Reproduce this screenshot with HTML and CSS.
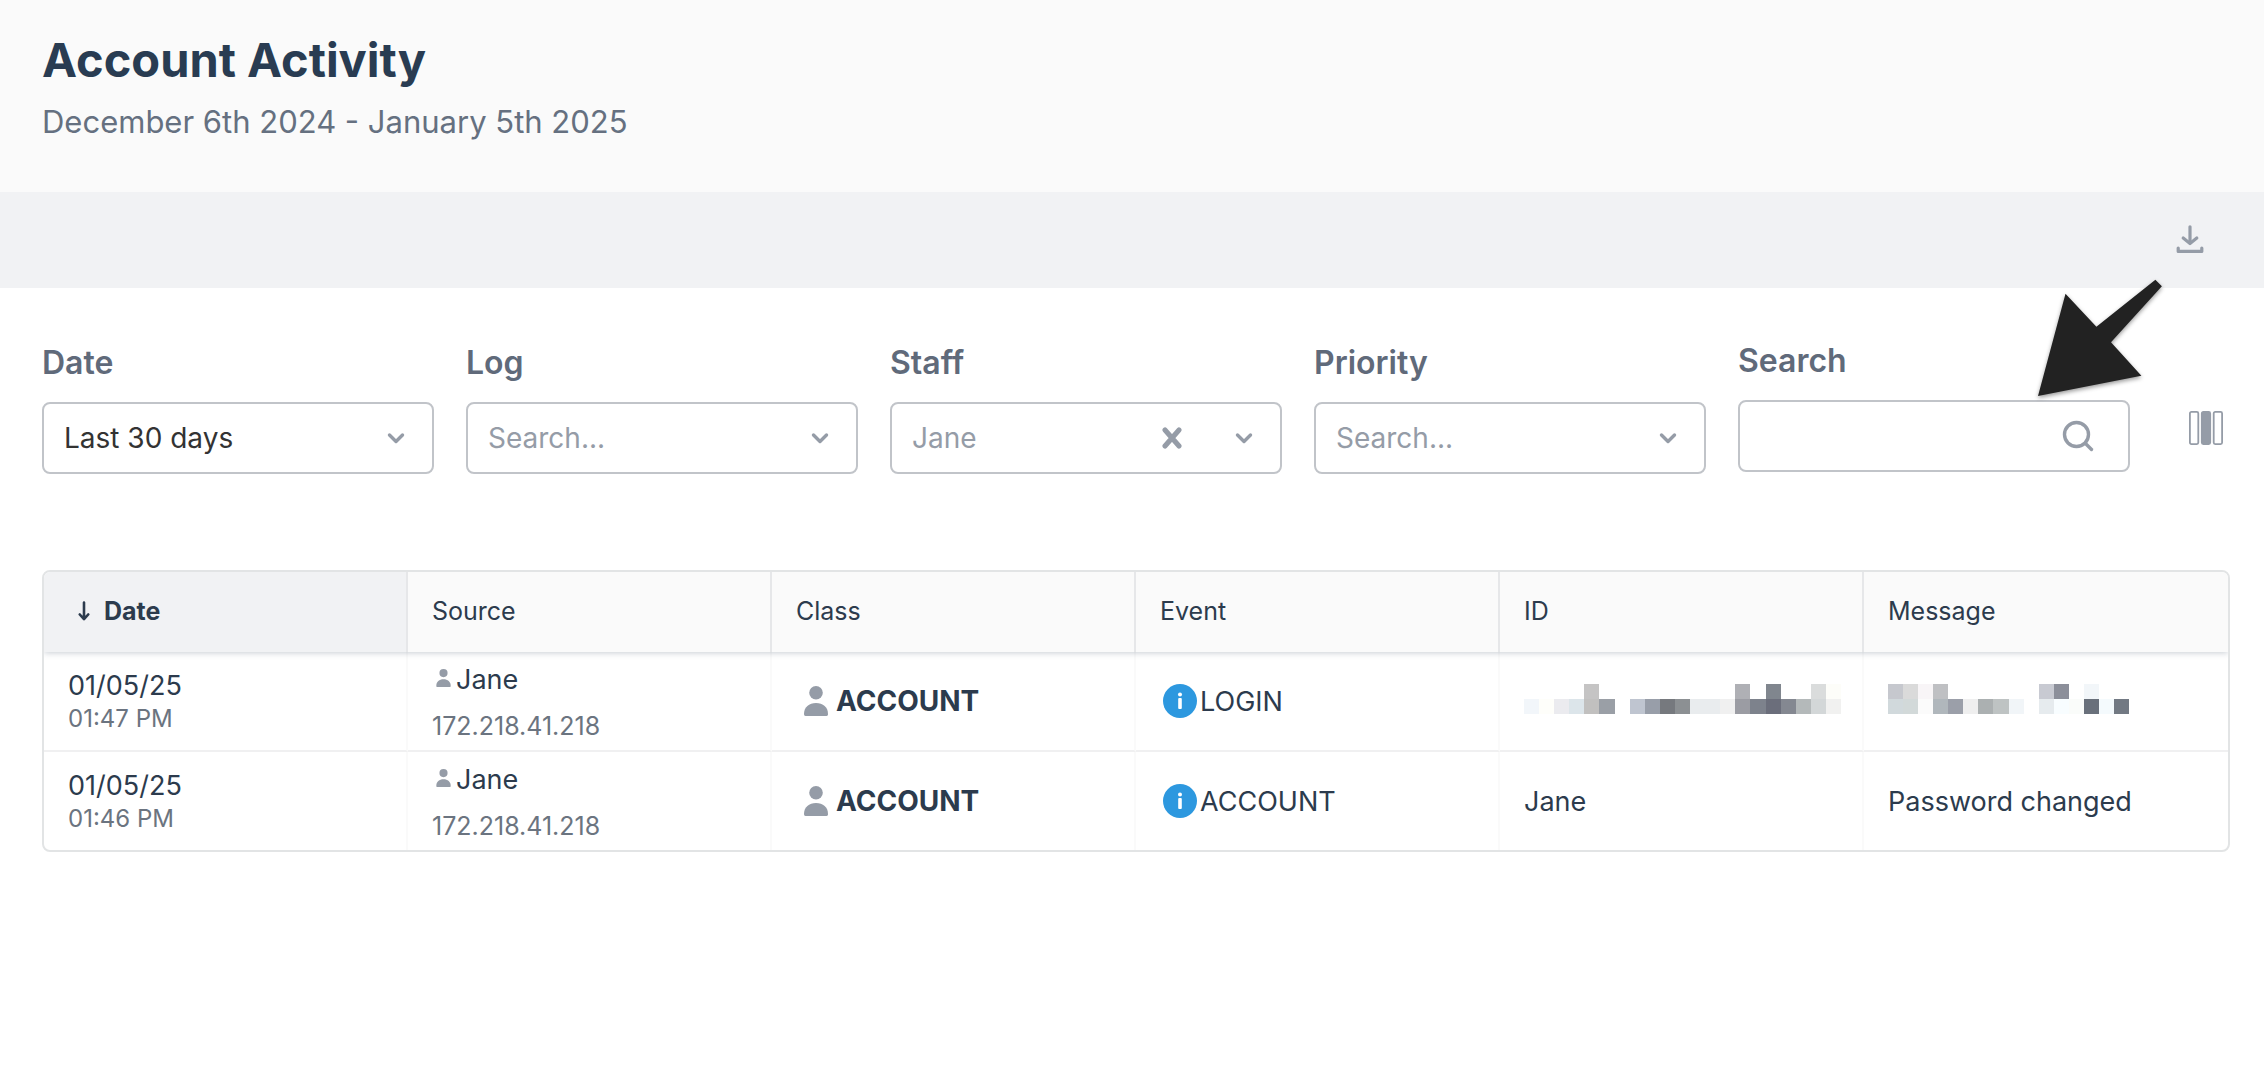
FILE: index.html
```html
<!DOCTYPE html>
<html lang="en">
<head>
<meta charset="utf-8">
<meta name="viewport" content="width=device-width, initial-scale=1">
<title>Account Activity</title>
<link rel="stylesheet" href="styles.css">
</head>
<body>
<svg class="sprite" aria-hidden="true">
  <symbol id="chevron" viewBox="0 0 20 12"><path d="M3.5 3 10 9.5 16.5 3" fill="none" stroke="currentColor" stroke-width="3.4" stroke-linecap="round" stroke-linejoin="round"/></symbol>
  <symbol id="person" viewBox="0 0 24 30"><ellipse cx="12" cy="6.8" rx="6.8" ry="6.8" fill="currentColor"/><path d="M0 28C0 21 5 17 12 17s12 4 12 11c0 1.300-.5 2-1.500 2h-21C.5 30 0 29.300 0 28z" fill="currentColor"/></symbol>
  <symbol id="info" viewBox="0 0 34 34"><circle cx="17" cy="17" r="17" fill="#2d98df"/><circle cx="17" cy="10.500" r="2" fill="#fff"/><rect x="15.200" y="14" width="3.600" height="11" rx="1" fill="#fff"/></symbol>
</svg>

<header class="page-header">
  <h1 class="page-title">Account Activity</h1>
  <p class="page-subtitle">December 6th 2024 - January 5th 2025</p>
</header>

<div class="toolbar">
  <button class="icon-button" type="button" aria-label="Download">
    <svg width="28" height="28" viewBox="0 0 28 28" fill="none" stroke="currentColor" stroke-width="3.200" stroke-linecap="round" stroke-linejoin="round"><path d="M14 1.800v16"/><path d="M7.200 13 14 18.500 20.800 13"/><path d="M2.200 23v3.400h23.600V23"/></svg>
  </button>
</div>

<main class="content">
  <form class="filters">
    <div class="field">
      <label class="label" for="date">Date</label>
      <div class="control">
        <select class="input input-filled" id="date"><option>Last 30 days</option></select>
        <span class="adornments"><svg class="chevron"><use href="#chevron"/></svg></span>
      </div>
    </div>
    <div class="field">
      <label class="label" for="log">Log</label>
      <div class="control">
        <select class="input" id="log"><option>Search...</option></select>
        <span class="adornments"><svg class="chevron"><use href="#chevron"/></svg></span>
      </div>
    </div>
    <div class="field">
      <label class="label" for="staff">Staff</label>
      <div class="control">
        <select class="input" id="staff"><option>Jane</option></select>
        <span class="adornments">
          <button class="clear" type="button" aria-label="Clear staff"><svg width="20" height="22" viewBox="0 0 20 22"><path d="M3 3l14 16M17 3 3 19" stroke="currentColor" stroke-width="5" stroke-linecap="round"/></svg></button>
          <svg class="chevron"><use href="#chevron"/></svg>
        </span>
      </div>
    </div>
    <div class="field">
      <label class="label" for="priority">Priority</label>
      <div class="control">
        <select class="input" id="priority"><option>Search...</option></select>
        <span class="adornments"><svg class="chevron"><use href="#chevron"/></svg></span>
      </div>
    </div>
    <div class="field field-search">
      <label class="label" for="search">Search</label>
      <div class="control">
        <input class="input" id="search" type="text">
        <span class="adornments adornments-search"><svg width="32" height="32" viewBox="0 0 32 32" fill="none" stroke="currentColor" stroke-width="3.400" stroke-linecap="round"><circle cx="14.500" cy="14.500" r="12"/><path d="M23.500 23.500 29.500 29.500"/></svg></span>
      </div>
      <svg class="pointer" width="132" height="124" viewBox="0 0 132 124" aria-hidden="true"><path d="M121.400 3.700 127.900 10.300 77 66.300 107.400 99.700 4 120 31.500 17.700 62.400 50.700z" fill="#222"/></svg>
    </div>
    <button class="icon-button columns-button" type="button" aria-label="Choose columns">
      <svg width="34" height="34" viewBox="0 0 34 34" fill="none" stroke="currentColor" stroke-width="1.800"><rect x=".9" y=".9" width="8.400" height="32.200" rx="1.500"/><rect x="12.800" y=".9" width="8.400" height="32.200" rx="1.500" fill="currentColor"/><rect x="24.700" y=".9" width="8.400" height="32.200" rx="1.500"/></svg>
    </button>
  </form>

  <div class="table-frame">
    <table class="log-table">
      <thead>
        <tr>
          <th class="sorted" scope="col" aria-sort="descending"><span class="sort-label"><svg width="12" height="20" viewBox="0 0 12 20" fill="none" stroke="currentColor" stroke-width="2.600" stroke-linecap="round" stroke-linejoin="round"><path d="M6 1.500v16.500M1.800 13.500 6 18.200l4.200-4.700"/></svg>Date</span></th>
          <th scope="col">Source</th>
          <th scope="col">Class</th>
          <th scope="col">Event</th>
          <th scope="col">ID</th>
          <th scope="col">Message</th>
        </tr>
      </thead>
      <tbody>
        <tr>
          <td><div class="date">01/05/25</div><div class="time">01:47 PM</div></td>
          <td><div class="user"><svg class="person-small"><use href="#person"/></svg>Jane</div><div class="ip">172.218.41.218</div></td>
          <td><div class="class-name"><svg class="person"><use href="#person"/></svg>ACCOUNT</div></td>
          <td><div class="event"><svg class="info"><use href="#info"/></svg>LOGIN</div></td>
          <td>
            <svg class="redacted" width="317" height="30" viewBox="0 0 21 2" preserveAspectRatio="none" role="img" aria-label="Redacted">
              <rect x="0" y="1" width="1" height="1" fill="#f2f6fa"/>
              <rect x="1" y="1" width="1" height="1" fill="#fefefa"/>
              <rect x="2" y="1" width="1" height="1" fill="#ebebef"/>
              <rect x="3" y="1" width="1" height="1" fill="#dce5ea"/>
              <rect x="4" y="0" width="1" height="1" fill="#c5c4c4"/>
              <rect x="4" y="1" width="1" height="1" fill="#c1c0bf"/>
              <rect x="5" y="1" width="1" height="1" fill="#9a9fa6"/>
              <rect x="7" y="1" width="1" height="1" fill="#bfc5d0"/>
              <rect x="8" y="1" width="1" height="1" fill="#989ea9"/>
              <rect x="9" y="1" width="1" height="1" fill="#76797e"/>
              <rect x="10" y="1" width="1" height="1" fill="#8c9093"/>
              <rect x="11" y="1" width="2" height="1" fill="#e9ecee"/>
              <rect x="13" y="1" width="1" height="1" fill="#f0f0f0"/>
              <rect x="14" y="0" width="1" height="1" fill="#afb0b5"/>
              <rect x="14" y="1" width="1" height="1" fill="#9b9ca3"/>
              <rect x="15" y="1" width="1" height="1" fill="#7d828c"/>
              <rect x="16" y="0" width="1" height="1" fill="#80868e"/>
              <rect x="16" y="1" width="1" height="1" fill="#6b6e7b"/>
              <rect x="17" y="1" width="1" height="1" fill="#848891"/>
              <rect x="18" y="1" width="1" height="1" fill="#b4b9ba"/>
              <rect x="19" y="0" width="1" height="1" fill="#dadcdc"/>
              <rect x="19" y="1" width="1" height="1" fill="#d3d7d8"/>
              <rect x="20" y="0" width="1" height="1" fill="#fdfdf9"/>
              <rect x="20" y="1" width="1" height="1" fill="#f1f1f0"/>
            </svg>
          </td>
          <td>
            <svg class="redacted" width="241" height="30" viewBox="0 0 16 2" preserveAspectRatio="none" role="img" aria-label="Redacted">
              <rect x="0" y="0" width="1" height="1" fill="#c6c8ce"/>
              <rect x="1" y="0" width="1" height="1" fill="#dadada"/>
              <rect x="2" y="0" width="1" height="1" fill="#f8f5f7"/>
              <rect x="3" y="0" width="1" height="1" fill="#bfc0c3"/>
              <rect x="10" y="0" width="1" height="1" fill="#c8cad2"/>
              <rect x="11" y="0" width="1" height="1" fill="#8c8f9a"/>
              <rect x="13" y="0" width="1" height="1" fill="#f2f6f9"/>
              <rect x="0" y="1" width="1" height="1" fill="#d1d9dc"/>
              <rect x="1" y="1" width="1" height="1" fill="#d2d9d9"/>
              <rect x="2" y="1" width="1" height="1" fill="#fbfbfb"/>
              <rect x="3" y="1" width="1" height="1" fill="#b0b7bc"/>
              <rect x="4" y="1" width="1" height="1" fill="#9b9fa9"/>
              <rect x="5" y="1" width="1" height="1" fill="#efefef"/>
              <rect x="6" y="1" width="1" height="1" fill="#abb0b1"/>
              <rect x="7" y="1" width="1" height="1" fill="#bec3c3"/>
              <rect x="8" y="1" width="1" height="1" fill="#f1f5f8"/>
              <rect x="10" y="1" width="1" height="1" fill="#e6ebee"/>
              <rect x="11" y="1" width="1" height="1" fill="#f8fdff"/>
              <rect x="12" y="1" width="1" height="1" fill="#fafcfa"/>
              <rect x="13" y="1" width="1" height="1" fill="#69707b"/>
              <rect x="14" y="1" width="1" height="1" fill="#f4fafd"/>
              <rect x="15" y="1" width="1" height="1" fill="#727983"/>
            </svg>
          </td>
        </tr>
        <tr>
          <td><div class="date">01/05/25</div><div class="time">01:46 PM</div></td>
          <td><div class="user"><svg class="person-small"><use href="#person"/></svg>Jane</div><div class="ip">172.218.41.218</div></td>
          <td><div class="class-name"><svg class="person"><use href="#person"/></svg>ACCOUNT</div></td>
          <td><div class="event"><svg class="info"><use href="#info"/></svg>ACCOUNT</div></td>
          <td>Jane</td>
          <td>Password changed</td>
        </tr>
      </tbody>
    </table>
  </div>
</main>
</body>
</html>
```
FILE: styles.css
```css
*, *::before, *::after { box-sizing: border-box; }

body {
  margin: 0;
  background: #fff;
  color: #2c3b4d;
  font-family: Inter, "Liberation Sans", sans-serif;
  font-size: 28px;
}

.sprite { display: none; }

svg { display: block; flex: none; }

.page-header {
  padding: 32px 42px 50px;
  background: #fafafa;
}

.page-title {
  margin: 0 0 14px;
  color: #293c52;
  font-size: 47px;
  font-weight: 700;
  line-height: 56px;
}

.page-subtitle {
  margin: 0;
  color: #657080;
  font-size: 31px;
  line-height: 40px;
}

.toolbar {
  display: flex;
  justify-content: flex-end;
  padding: 23px 50px 25px;
  background: #f1f2f4;
}

.icon-button {
  display: grid;
  place-items: center;
  width: 48px;
  height: 48px;
  padding: 0;
  border: 0;
  background: none;
  color: #959ca7;
}

.content { padding: 52px 34px 52px 42px; }

.filters {
  display: flex;
  align-items: flex-end;
  gap: 32px;
  margin-bottom: 96px;
}

.field { flex: 1 1 0; min-width: 0; }

.field-search { position: relative; padding-bottom: 2px; }

.label {
  display: block;
  margin-bottom: 18px;
  color: #606a7a;
  font-size: 32px;
  font-weight: 600;
  line-height: 42px;
}

.control { display: grid; color: #959ca7; }

.control > * { grid-area: 1 / 1; }

.input {
  width: 100%;
  height: 72px;
  padding: 0 20px;
  appearance: none;
  border: 2px solid #c1c4c9;
  border-radius: 8px;
  background: #fff;
  color: #959ca7;
  font: inherit;
}

.input-filled { color: #333; }

.adornments {
  display: flex;
  align-items: center;
  align-self: center;
  justify-self: end;
  gap: 52px;
  margin-right: 28px;
  pointer-events: none;
}

.adornments-search { margin-right: 36px; }

.chevron { width: 20px; height: 12px; }

.clear {
  padding: 0;
  border: 0;
  background: none;
  color: inherit;
  pointer-events: auto;
}

.pointer {
  position: absolute;
  top: -64px;
  right: -36px;
  overflow: visible;
  filter: drop-shadow(0 2px 2px rgba(0, 0, 0, .4));
  pointer-events: none;
}

.columns-button { margin: 0 0 22px 20px; }

.table-frame {
  overflow: hidden;
  border: 2px solid #e2e4e5;
  border-radius: 8px;
}

.log-table {
  width: 100%;
  table-layout: fixed;
  border-spacing: 0;
  font-size: 27px;
}

.log-table thead { box-shadow: 0 1px 6px rgba(41, 60, 82, .25); position: relative; }

.log-table th {
  height: 80px;
  padding: 0 24px 2px;
  border-right: 2px solid #e6e7e9;
  background: #fafafa;
  font-size: 25px;
  font-weight: 400;
  text-align: left;
}

.log-table .sorted {
  padding-left: 34px;
  background: #f1f2f4;
  font-weight: 700;
}

.sort-label { display: flex; align-items: center; gap: 14px; }

.log-table td {
  height: 100px;
  padding: 0 24px;
  border-right: 2px solid #fafafa;
  border-bottom: 2px solid #f0f0f1;
}

.log-table tr > :last-child { border-right: 0; }

.log-table tbody tr:last-child td { height: 98px; border-bottom: 0; }

.date { line-height: 36px; }

.time { color: #6b7480; font-size: 24px; line-height: 30px; }

.user {
  display: flex;
  align-items: center;
  gap: 5px;
  padding-left: 4px;
  line-height: 50px;
}

.ip { color: #6b7480; font-size: 25px; line-height: 42px; }

.person-small {
  width: 15px;
  height: 18px;
  margin-bottom: 4px;
  color: #959ca7;
}

.class-name {
  display: flex;
  align-items: center;
  gap: 8px;
  padding-left: 8px;
  font-size: 28px;
  font-weight: 700;
}

.person { width: 24px; height: 30px; color: #959ca7; }

.event { display: flex; align-items: center; gap: 3px; padding-left: 3px; }

.info { width: 34px; height: 34px; }

.redacted { margin-bottom: 4px; shape-rendering: crispEdges; }
```
